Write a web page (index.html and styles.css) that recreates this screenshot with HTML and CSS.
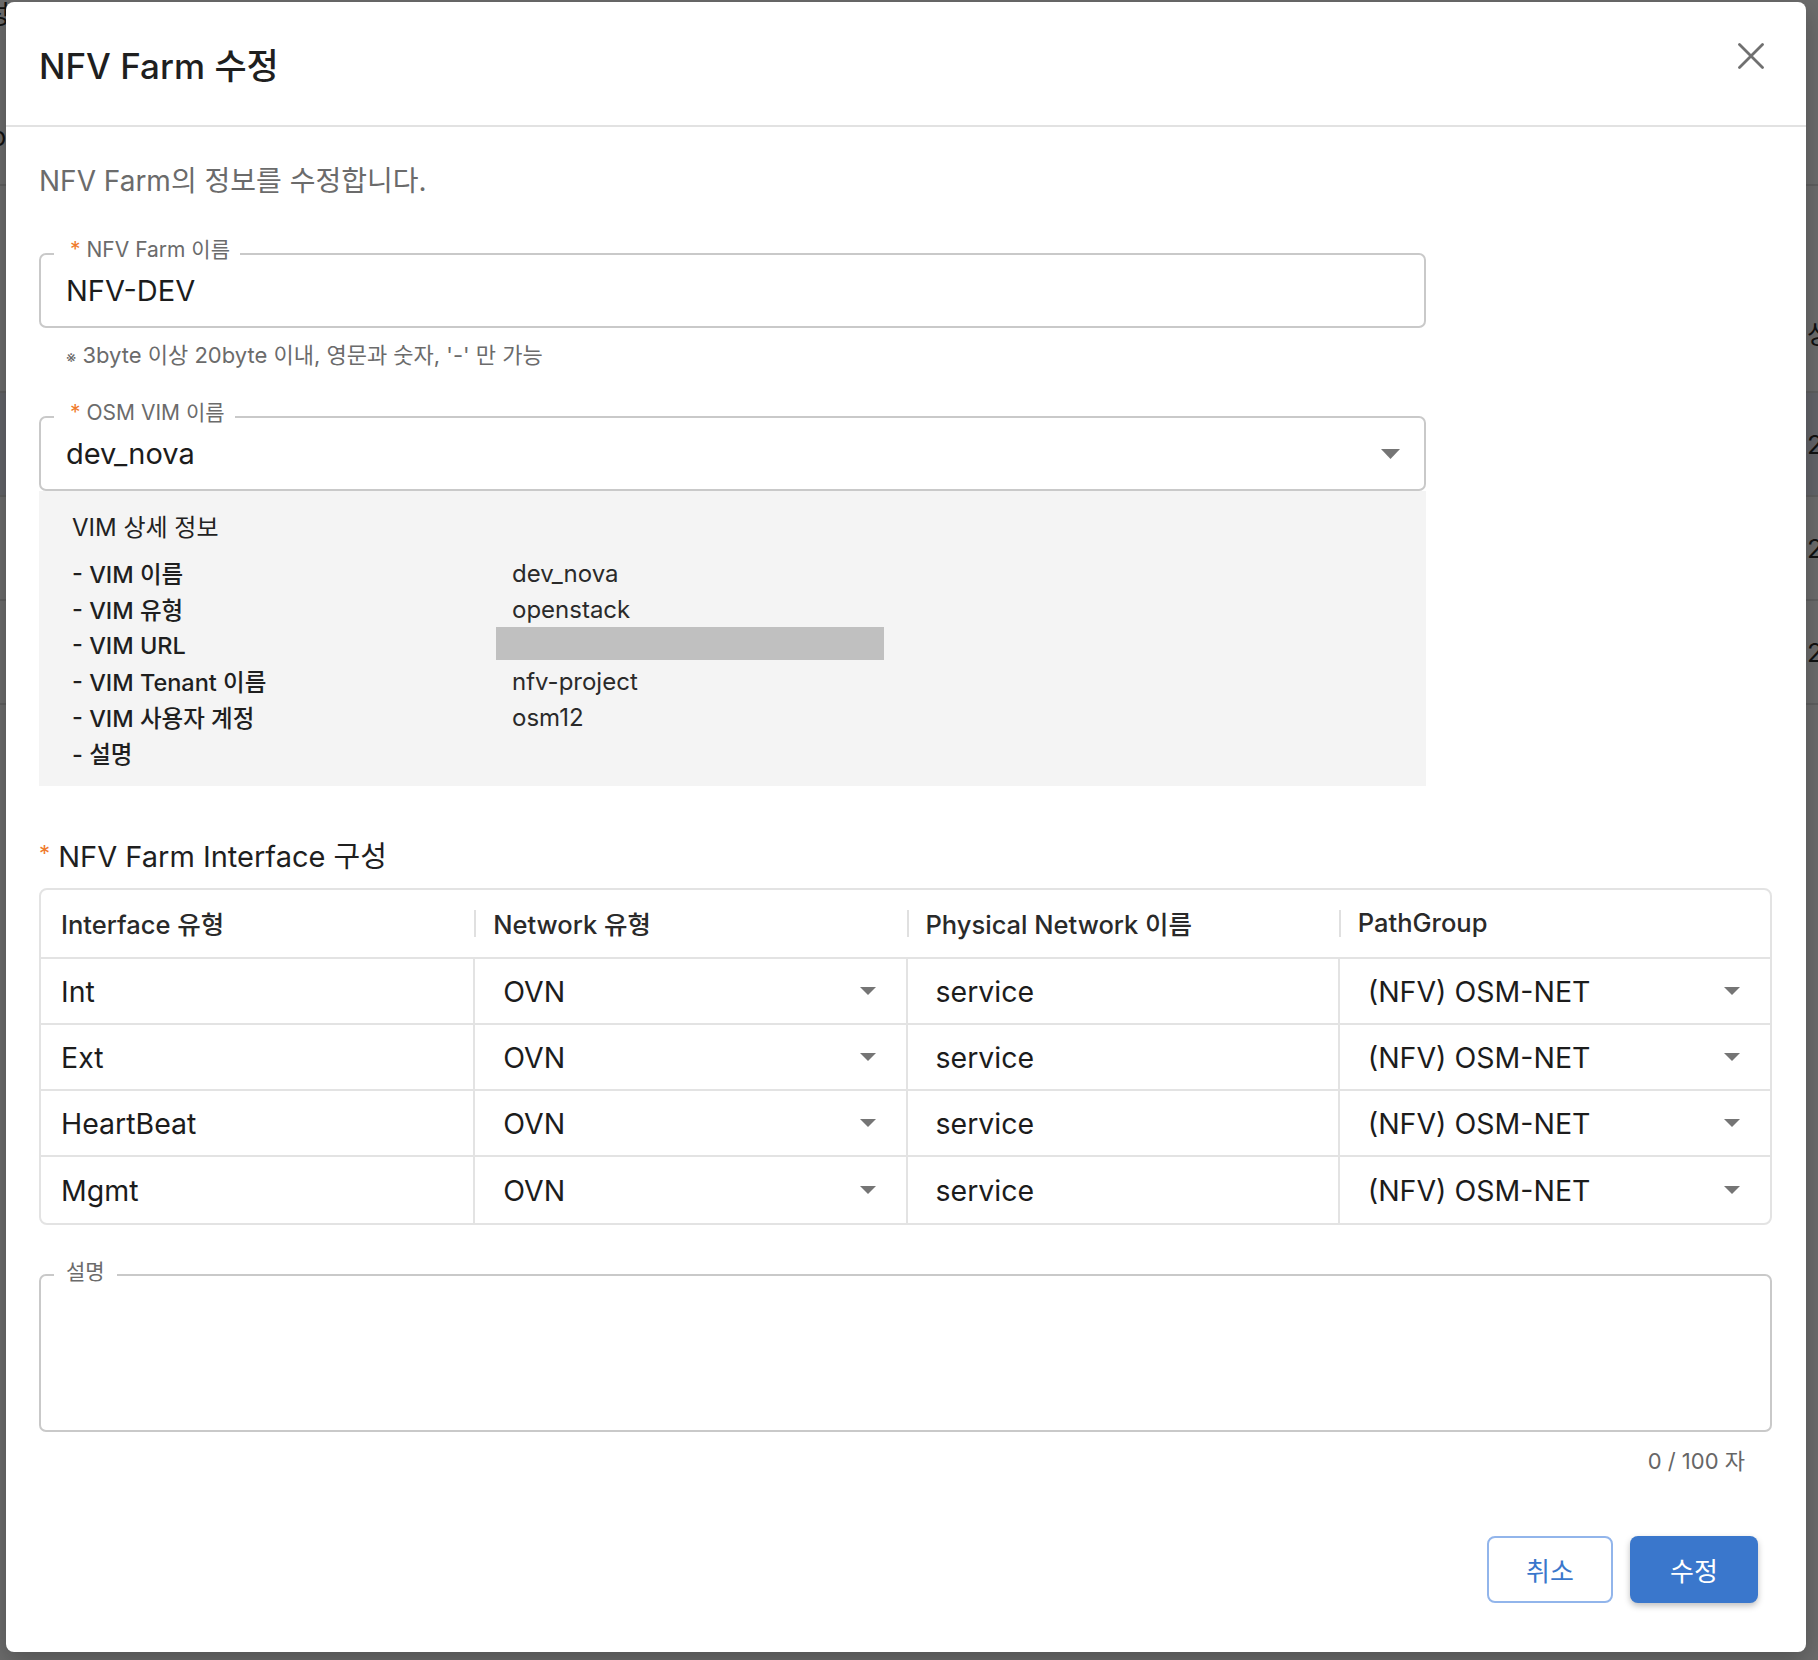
FILE: index.html
```html
<!DOCTYPE html>
<html lang="ko">
<head>
<meta charset="utf-8">
<title>NFV Farm 수정</title>
<link rel="stylesheet" href="styles.css">
</head>
<body>
<div class="backdrop">
  <div class="bd-row bd-top">
    <span class="bd-left bd-l1">성</span>
    <span class="bd-left bd-l2">Do</span>
  </div>
  <div class="bd-row bd-head"><span class="bd-right">상태</span></div>
  <div class="bd-row bd-sel"><span class="bd-right">2023</span></div>
  <div class="bd-row"><span class="bd-right">2023</span></div>
  <div class="bd-row"><span class="bd-right">2023</span></div>
</div>

<div class="dialog" role="dialog">
  <header class="dlg-head">
    <h2 class="dlg-title">NFV Farm 수정</h2>
    <button class="close" aria-label="닫기">
      <svg width="26" height="26" viewBox="0 0 26 26"><path d="M1.5 1.5 L24.5 24.5 M24.5 1.5 L1.5 24.5" stroke="#707070" stroke-width="2.8" stroke-linecap="round" fill="none"/></svg>
    </button>
  </header>

  <div class="dlg-body">
    <p class="desc">NFV Farm의 정보를 수정합니다.</p>

    <div class="field field-input">
      <span class="flabel"><i class="req">*</i>NFV Farm 이름</span>
      <span class="fvalue">NFV-DEV</span>
    </div>
    <p class="helper"><span class="note">※</span> 3byte 이상 20byte 이내, 영문과 숫자, '-' 만 가능</p>

    <div class="field field-input field-select">
      <span class="flabel"><i class="req">*</i>OSM VIM 이름</span>
      <span class="fvalue">dev_nova</span>
      <svg class="caret caret-lg" width="19" height="10" viewBox="0 0 19 10"><path d="M0 0 H19 L9.5 10 Z" fill="#757575"/></svg>
    </div>

    <div class="vim-info">
      <div class="vim-title">VIM 상세 정보</div>
      <div class="vim-grid">
        <span class="vk">- VIM 이름</span><span class="vv">dev_nova</span>
        <span class="vk">- VIM 유형</span><span class="vv">openstack</span>
        <span class="vk">- VIM URL</span><span class="vv"><span class="redact"></span></span>
        <span class="vk">- VIM Tenant 이름</span><span class="vv">nfv-project</span>
        <span class="vk">- VIM 사용자 계정</span><span class="vv">osm12</span>
        <span class="vk">- 설명</span><span class="vv"></span>
      </div>
    </div>

    <h3 class="sec-title"><i class="req req-sm">*</i> NFV Farm Interface 구성</h3>

    <div class="itable">
      <div class="thead">
        <div class="th">Interface 유형</div>
        <div class="th">Network 유형</div>
        <div class="th">Physical Network 이름</div>
        <div class="th">PathGroup</div>
      </div>
      <div class="trow">
        <div class="td">Int</div>
        <div class="td td-sel">OVN<svg class="caret" width="16" height="8" viewBox="0 0 16 8"><path d="M0 0 H16 L8 8 Z" fill="#757575"/></svg></div>
        <div class="td td-in">service</div>
        <div class="td td-sel">(NFV) OSM-NET<svg class="caret" width="16" height="8" viewBox="0 0 16 8"><path d="M0 0 H16 L8 8 Z" fill="#757575"/></svg></div>
      </div>
      <div class="trow">
        <div class="td">Ext</div>
        <div class="td td-sel">OVN<svg class="caret" width="16" height="8" viewBox="0 0 16 8"><path d="M0 0 H16 L8 8 Z" fill="#757575"/></svg></div>
        <div class="td td-in">service</div>
        <div class="td td-sel">(NFV) OSM-NET<svg class="caret" width="16" height="8" viewBox="0 0 16 8"><path d="M0 0 H16 L8 8 Z" fill="#757575"/></svg></div>
      </div>
      <div class="trow">
        <div class="td">HeartBeat</div>
        <div class="td td-sel">OVN<svg class="caret" width="16" height="8" viewBox="0 0 16 8"><path d="M0 0 H16 L8 8 Z" fill="#757575"/></svg></div>
        <div class="td td-in">service</div>
        <div class="td td-sel">(NFV) OSM-NET<svg class="caret" width="16" height="8" viewBox="0 0 16 8"><path d="M0 0 H16 L8 8 Z" fill="#757575"/></svg></div>
      </div>
      <div class="trow">
        <div class="td">Mgmt</div>
        <div class="td td-sel">OVN<svg class="caret" width="16" height="8" viewBox="0 0 16 8"><path d="M0 0 H16 L8 8 Z" fill="#757575"/></svg></div>
        <div class="td td-in">service</div>
        <div class="td td-sel">(NFV) OSM-NET<svg class="caret" width="16" height="8" viewBox="0 0 16 8"><path d="M0 0 H16 L8 8 Z" fill="#757575"/></svg></div>
      </div>
    </div>

    <div class="field field-area">
      <span class="flabel flabel-plain">설명</span>
    </div>
    <div class="counter">0 / 100 자</div>

    <div class="actions">
      <button class="btn btn-outline">취소</button>
      <button class="btn btn-primary">수정</button>
    </div>
  </div>
</div>
</body>
</html>
```

FILE: styles.css
```css
* { box-sizing: border-box; }

html, body {
  margin: 0;
  padding: 0;
}

body {
  position: relative;
  width: 1818px;
  height: 1660px;
  overflow: hidden;
  background: #6c6c6c;
  font-family: Inter, "Noto Sans CJK KR", sans-serif;
  color: #1f1f1f;
}

/* ---------- page behind the overlay ---------- */
.backdrop {
  display: flex;
  flex-direction: column;
}

.bd-row {
  height: 104px;
  border-bottom: 2px solid #5f5f5f;
  display: flex;
  align-items: center;
  font-size: 26px;
  color: #111;
  white-space: nowrap;
}

.bd-top {
  height: 186px;
  flex-direction: column;
  align-items: flex-start;
  justify-content: flex-start;
}

.bd-head {
  height: 207px;
  align-items: flex-end;
  padding-bottom: 40px;
}

.bd-sel {
  background: #636469;
}

.bd-left {
  margin-left: -14px;
  line-height: 30px;
}

.bd-l2 { margin-top: 92px; margin-left: -28px; }

.bd-right {
  flex: none;
  margin-left: 1807px;
}

/* ---------- dialog ---------- */
.dialog {
  position: absolute;
  left: 6px;
  top: 2px;
  width: 1800px;
  height: 1650px;
  background: #fff;
  border-radius: 8px;
  box-shadow: 0 8px 24px rgba(0, 0, 0, 0.25);
  display: flex;
  flex-direction: column;
}

.dlg-head {
  height: 125px;
  flex: none;
  border-bottom: 2px solid #e2e2e2;
  display: flex;
  align-items: center;
  justify-content: space-between;
  padding: 0 42px 0 33px;
}

.dlg-title {
  margin: 0;
  font-size: 35px;
  font-weight: 500;
  color: #1f1f1f;
}

.close {
  align-self: flex-start;
  margin-top: 41px;
  width: 26px;
  height: 26px;
  padding: 0;
  border: 0;
  background: none;
  display: block;
}

.close svg { display: block; }

.dlg-body {
  padding: 34px 34px 0 33px;
}

.desc {
  margin: 0;
  height: 40px;
  font-size: 28px;
  line-height: 40px;
  color: #6b6b6b;
}

/* outlined fields */
.field {
  position: relative;
  border: 2px solid #c9c9c9;
  border-radius: 7px;
  display: flex;
  align-items: center;
}

.field-input {
  width: 1387px;
  height: 75px;
  padding: 0 24px 0 25px;
  margin-top: 52px;
}

.flabel {
  position: absolute;
  top: -17px;
  left: 13px;
  padding: 0 10px 0 16px;
  background: #fff;
  font-size: 21px;
  line-height: 24px;
  color: #6b6b6b;
  white-space: nowrap;
}

.flabel-plain {
  padding: 0 12px 0 12px;
  top: -16px;
}

.req {
  font-style: normal;
  color: #ef7a2c;
  margin-right: 6px;
}

.fvalue {
  font-size: 29px;
  color: #1c1c1c;
}

.field-select .caret-lg {
  margin-left: auto;
}

.caret { display: block; flex: none; }

.helper {
  margin: 13px 0 0 27px;
  height: 28px;
  font-size: 22px;
  line-height: 28px;
  color: #6b6b6b;
  white-space: nowrap;
}

.note {
  font-size: 16px;
}

.field-select {
  margin-top: 47px;
}

/* VIM info */
.vim-info {
  width: 1387px;
  background: #f4f4f4;
  padding: 19px 33px 15px;
}

.vim-title {
  height: 36px;
  font-size: 24px;
  line-height: 36px;
  color: #222;
}

.vim-grid {
  display: grid;
  grid-template-columns: 440px 1fr;
  grid-auto-rows: 36px;
  align-items: center;
  margin-top: 9px;
  font-size: 24px;
}

.vk {
  font-size: 23.5px;
  font-weight: 500;
  color: #1f1f1f;
}

.vv {
  color: #2a2a2a;
  display: flex;
  align-items: center;
}

.redact {
  display: block;
  width: 388px;
  height: 33px;
  margin-left: -16px;
  margin-top: -4px;
  background: #c0c0c0;
}

/* section title */
.sec-title {
  margin: 47px 0 0;
  height: 40px;
  font-size: 29px;
  line-height: 40px;
  font-weight: 400;
  color: #1f1f1f;
}

.req-sm {
  font-size: 22px;
  vertical-align: 6px;
  margin-right: 0;
}

/* interface table */
.itable {
  margin-top: 15px;
  width: 1733px;
  border: 2px solid #e3e3e3;
  border-radius: 8px;
  overflow: hidden;
}

.thead,
.trow {
  display: grid;
  grid-template-columns: repeat(4, 1fr);
}

.thead {
  height: 69px;
  border-bottom: 2px solid #e3e3e3;
}

.th {
  position: relative;
  display: flex;
  align-items: center;
  padding-left: 20px;
  padding-bottom: 2px;
  font-size: 25.5px;
  font-weight: 500;
  color: #2a2a2a;
}

.th + .th::before {
  content: "";
  position: absolute;
  left: 1px;
  top: 20px;
  width: 2px;
  height: 27px;
  background: #e0e0e0;
}

.trow {
  height: 66px;
  border-bottom: 2px solid #e3e3e3;
}

.trow:last-child {
  border-bottom: 0;
  height: 66px;
}

.td {
  display: flex;
  align-items: center;
  padding-left: 28px;
  font-size: 28.5px;
  color: #1c1c1c;
  border-left: 2px solid #e3e3e3;
}

.td:first-child {
  border-left: 0;
  padding-left: 20px;
}

.td-sel .caret {
  margin-left: auto;
  margin-right: 30px;
}

/* description */
.field-area {
  margin-top: 49px;
  width: 1733px;
  height: 158px;
}

.counter {
  margin-top: 14px;
  height: 30px;
  padding-right: 27px;
  text-align: right;
  font-size: 22px;
  line-height: 30px;
  color: #666;
}

.actions {
  display: flex;
  justify-content: flex-end;
  gap: 17px;
  margin-top: 60px;
  margin-right: 14px;
}

.btn {
  height: 67px;
  border-radius: 8px;
  font-family: inherit;
  font-size: 26px;
  cursor: pointer;
}

.btn-outline {
  width: 126px;
  background: #fff;
  border: 2px solid #92b5eb;
  color: #3a77cc;
}

.btn-primary {
  width: 128px;
  background: #3a77cc;
  border: 0;
  color: #fff;
  box-shadow: 0 3px 6px rgba(0, 0, 0, 0.25);
}
```
